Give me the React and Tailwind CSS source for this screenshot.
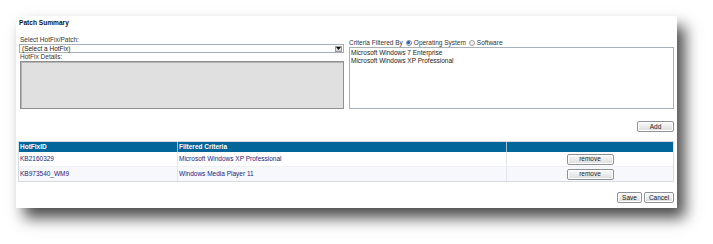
import React from "react";

function Btn({ children, className = "" }) {
  return (
    <div
      className={
        "flex items-center justify-center border border-[#8e9297] rounded-[2px] bg-gradient-to-b from-[#fbfbfb] to-[#dcdcdc] text-[#222] shadow-[inset_0_0_0_1px_#ffffff] " +
        className
      }
    >
      {children}
    </div>
  );
}

export default function App() {
  return (
    <div className="w-[713px] h-[244px] bg-white font-['Liberation_Sans',Arial,sans-serif] text-[6.5px] leading-[8px] text-[#222] overflow-hidden">
      <div className="ml-[16px] mt-[16px] w-[661px] h-[192px] bg-white shadow-[8px_10px_14px_rgba(0,0,0,0.7)] pl-[2px] pr-[3px] pt-[2px] flex flex-col">
        <div className="font-bold text-[6.6px] leading-[9px] pl-[1px] text-[#111]">Patch Summary</div>

        <div className="mt-[9px] flex justify-between">
          {/* left column */}
          <div className="flex flex-col w-[325px] ml-[1px]">
            <div className="pl-[1px] h-[8px] text-[#333]">Select HotFix/Patch:</div>
            <div className="h-[9px] border border-[#a8aeb6] bg-white flex items-center justify-between pl-[2px] pr-[1px]">
              <span className="text-[#222]">(Select a HotFix)</span>
              <div className="w-[7px] h-[6px] border border-[#9a9a9a] bg-gradient-to-b from-[#f4f4f4] to-[#d4d4d4] flex items-center justify-center">
                <svg width="5" height="3" viewBox="0 0 5 3">
                  <path d="M0 0H5L2.5 3Z" fill="#111" />
                </svg>
              </div>
            </div>
            <div className="pl-[1px] h-[8px] text-[#333]">HotFix Details:</div>
            <div className="ml-[1px] h-[48px] border border-[#8f8f8f] bg-[#e0e0e0] shadow-[inset_1px_1px_0_#b5b5b5]" />
          </div>

          {/* right column */}
          <div className="flex flex-col w-[325px] pt-[2px]">
            <div className="flex items-center h-[9px] gap-[2px] text-[#333]">
              <span>Criteria Filtered By</span>
              <span className="ml-[1px] w-[6px] h-[6px] rounded-full border border-[#7a8ea8] bg-[#dfe7f2] flex items-center justify-center">
                <span className="w-[3px] h-[3px] rounded-full bg-[#1d5aa8]" />
              </span>
              <span>Operating System</span>
              <span className="ml-[1px] w-[6px] h-[6px] rounded-full border border-[#a0a0a0] bg-[#f0f0f0]" />
              <span>Software</span>
            </div>
            <div className="h-[62px] border border-[#aab0b8] bg-white pl-[1px] pt-[1px] text-[#222]">
              <div>Microsoft Windows 7 Enterprise</div>
              <div>Microsoft Windows XP Professional</div>
            </div>
          </div>
        </div>

        <div className="mt-[12px] flex justify-end">
          <Btn className="w-[37px] h-[11px]">Add</Btn>
        </div>

        <div className="mt-[9px] border border-[#d6dbe2]">
          <div className="flex h-[10px] bg-[#02669b] text-white font-bold">
            <div className="w-[159px] pl-[1px] flex items-center border-r border-[#9fbfd6]">HotFixID</div>
            <div className="w-[329px] pl-[1px] flex items-center border-r border-[#9fbfd6]">Filtered Criteria</div>
            <div className="flex-1" />
          </div>
          <div className="flex h-[15px] bg-white text-[#23237a] border-b border-[#eef0f4]">
            <div className="w-[159px] pl-[1px] flex items-center border-r border-[#e2e6ec]">KB2160329</div>
            <div className="w-[329px] pl-[1px] flex items-center border-r border-[#e2e6ec]">Microsoft Windows XP Professional</div>
            <div className="flex-1 flex items-center justify-center">
              <Btn className="w-[47px] h-[11px]">remove</Btn>
            </div>
          </div>
          <div className="flex h-[14px] bg-[#f6f8fc] text-[#23237a]">
            <div className="w-[159px] pl-[1px] flex items-center border-r border-[#e2e6ec]">KB973540_WM9</div>
            <div className="w-[329px] pl-[1px] flex items-center border-r border-[#e2e6ec]">Windows Media Player 11</div>
            <div className="flex-1 flex items-center justify-center">
              <Btn className="w-[47px] h-[11px]">remove</Btn>
            </div>
          </div>
        </div>

        <div className="mt-[10px] flex justify-end gap-[2px]">
          <Btn className="w-[25px] h-[11px]">Save</Btn>
          <Btn className="w-[30px] h-[11px]">Cancel</Btn>
        </div>
      </div>
    </div>
  );
}
